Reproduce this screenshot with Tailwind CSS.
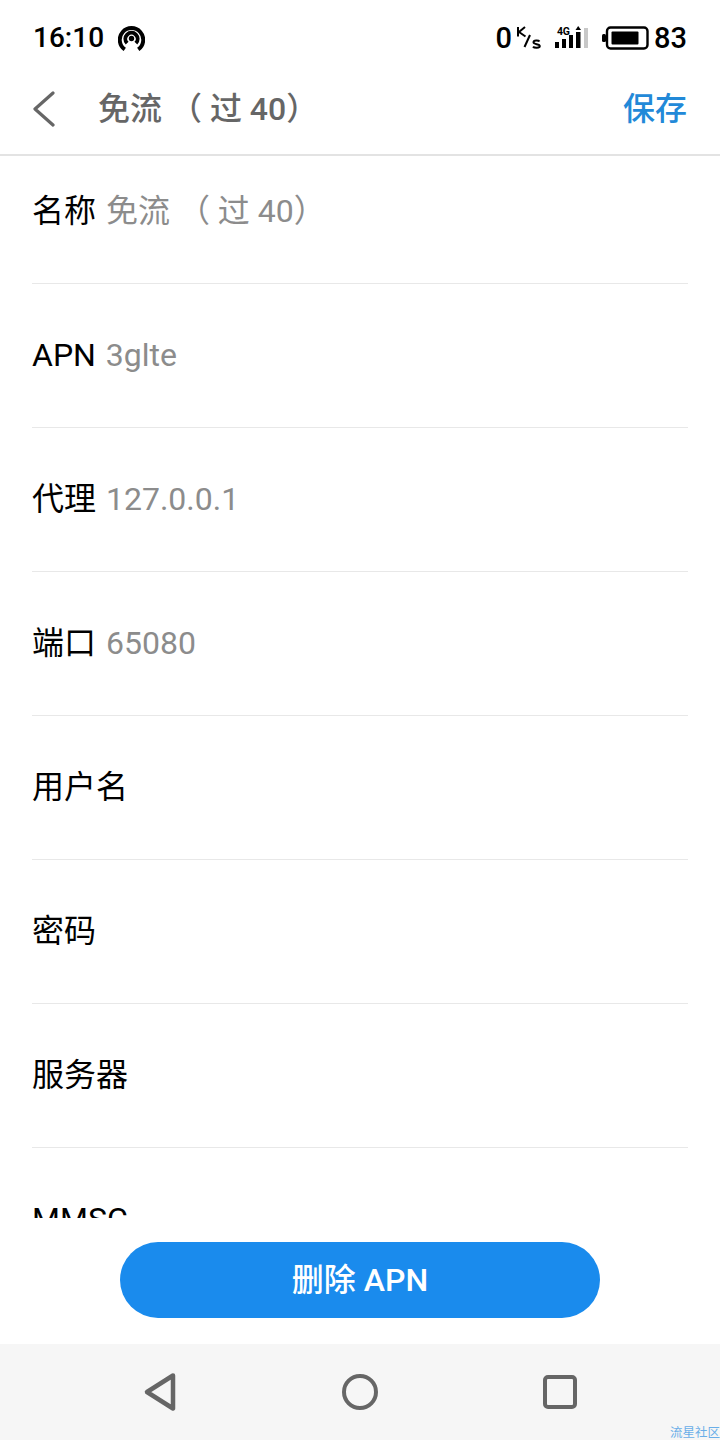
<!DOCTYPE html>
<html lang="zh-CN">
<head>
<meta charset="utf-8">
<script src="https://cdn.jsdelivr.net/npm/@tailwindcss/browser@4"></script>
</head>
<body class="m-0 bg-white font-['Roboto','Noto_Sans_CJK_SC',sans-serif]">
<div class="relative flex h-[1440px] w-[720px] flex-col overflow-hidden bg-white">
  <!-- status bar -->
  <div class="flex h-[74px] shrink-0 items-center justify-between pl-[33px] pr-[33px] pt-[2px] text-black">
    <div class="flex items-center gap-[14px]">
      <span class="text-[28px] font-medium leading-none">16:10</span>
      <svg width="27" height="25" viewBox="0 0 26 24" fill="none" stroke="#000" stroke-width="3.800" stroke-linecap="butt">
        <path d="M6.500 22.500 A11.300 11.300 0 1 1 19.500 22.500"/>
        <path d="M8.800 16.500 A5.900 5.900 0 1 1 17.200 16.500"/>
        <circle cx="13" cy="12" r="2.600" fill="#000" stroke="none"/>
      </svg>
    </div>
    <div class="flex items-center">
      <span class="text-[29px] font-medium leading-none">0</span>
      <svg class="ml-[3px]" width="26" height="26" viewBox="0 0 26 26" fill="none" stroke="#000" stroke-width="2">
        <path d="M3 2v9.500M10 2 L4 7 L10.500 11.500"/>
        <path d="M9.500 22 L15 10"/>
        <path d="M24.500 16.500c-1-1.500-6-1.500-6 .8 0 2.500 6.300 1.200 6.300 3.700 0 2.400-5.600 2.200-6.800.6"/>
      </svg>
      <svg class="ml-[14px]" width="33" height="24" viewBox="0 0 33 24">
        <rect x="0" y="16" width="4" height="6" fill="#000"/>
        <rect x="7" y="13" width="4" height="9" fill="#000"/>
        <rect x="14" y="9" width="4" height="13" fill="#000"/>
        <rect x="21" y="6" width="4.500" height="16" fill="#000"/>
        <rect x="29" y="2" width="4" height="20" fill="#c8c8c8"/>
        <path d="M23.200 0 L26 4 L20.500 4 Z" fill="#000"/>
        <text x="2" y="9" font-size="10.500" font-weight="700" fill="#000" font-family="Roboto, sans-serif" letter-spacing="-0.3">4G</text>
      </svg>
      <svg class="ml-[14px]" width="47" height="24" viewBox="0 0 47 24">
        <rect x="0" y="8" width="4" height="8" rx="1.500" fill="#000"/>
        <rect x="5" y="1.500" width="40.500" height="21" rx="3.500" fill="none" stroke="#000" stroke-width="2.400"/>
        <rect x="9.500" y="5.500" width="27" height="13" rx="1" fill="#000"/>
      </svg>
      <span class="ml-[5px] text-[29px] font-medium leading-none">83</span>
    </div>
  </div>
  <!-- app bar -->
  <div class="box-content flex h-[70px] shrink-0 items-center justify-between border-b-2 border-[#e3e3e3] pb-[10px] pl-[33px] pr-[33px]">
    <div class="flex items-center">
      <svg width="24" height="36" viewBox="0 0 24 36" fill="none" stroke="#666" stroke-width="3.200" stroke-linecap="round" stroke-linejoin="round">
        <path d="M20 2 L2 18 L20 34"/>
      </svg>
      <span class="ml-[41px] whitespace-pre text-[32px] font-medium leading-none text-[#666]">免流 （ 过 40）</span>
    </div>
    <span class="text-[32px] font-medium leading-none text-[#2289d8]">保存</span>
  </div>
  <!-- list -->
  <div class="h-[1062px] shrink-0 overflow-hidden px-[32px]">
    <div class="h-[128px] border-b border-[#e8e8e8] pt-[36px] text-[32px] leading-[38px] text-black">名称 <span class="ml-[2px] whitespace-pre text-[#8c8c8c]">免流 （ 过 40）</span></div>
    <div class="h-[144px] border-b border-[#e8e8e8] pt-[52px] text-[32px] leading-[38px] text-black">APN <span class="ml-[2px] text-[#8c8c8c]">3glte</span></div>
    <div class="h-[144px] border-b border-[#e8e8e8] pt-[52px] text-[32px] leading-[38px] text-black">代理 <span class="ml-[2px] text-[#8c8c8c]">127.0.0.1</span></div>
    <div class="h-[144px] border-b border-[#e8e8e8] pt-[52px] text-[32px] leading-[38px] text-black">端口 <span class="ml-[2px] text-[#8c8c8c]">65080</span></div>
    <div class="h-[144px] border-b border-[#e8e8e8] pt-[52px] text-[32px] leading-[38px] text-black">用户名</div>
    <div class="h-[144px] border-b border-[#e8e8e8] pt-[52px] text-[32px] leading-[38px] text-black">密码</div>
    <div class="h-[144px] border-b border-[#e8e8e8] pt-[52px] text-[32px] leading-[38px] text-black">服务器</div>
    <div class="h-[144px] pt-[52px] text-[32px] leading-[38px] text-black">MMSC</div>
  </div>
  <!-- button -->
  <div class="flex h-[126px] shrink-0 items-start justify-center pt-[24px]">
    <div class="flex h-[76px] w-[480px] items-center justify-center rounded-full bg-[#1a8bed] text-[32px] font-medium leading-none text-white">删除 APN</div>
  </div>
  <!-- nav -->
  <div class="relative flex h-[96px] shrink-0 items-center justify-between bg-[#f6f6f6] pl-[142px] pr-[142px]">
    <svg width="36" height="40" viewBox="0 0 36 40" fill="none" stroke="#666" stroke-width="4.500" stroke-linejoin="round"><path d="M31 3.500 L5 20 L31 36.500 Z"/></svg>
    <svg width="36" height="36" viewBox="0 0 36 36" fill="none" stroke="#666" stroke-width="4"><circle cx="18" cy="18" r="16"/></svg>
    <svg width="36" height="36" viewBox="0 0 36 36" fill="none" stroke="#666" stroke-width="4"><rect x="3" y="3" width="30" height="30" rx="3"/></svg>
    <span class="absolute bottom-0 right-0 text-[12.5px] leading-[14px] text-[#6aaee8]">流星社区</span>
  </div>
</div>
</body>
</html>
